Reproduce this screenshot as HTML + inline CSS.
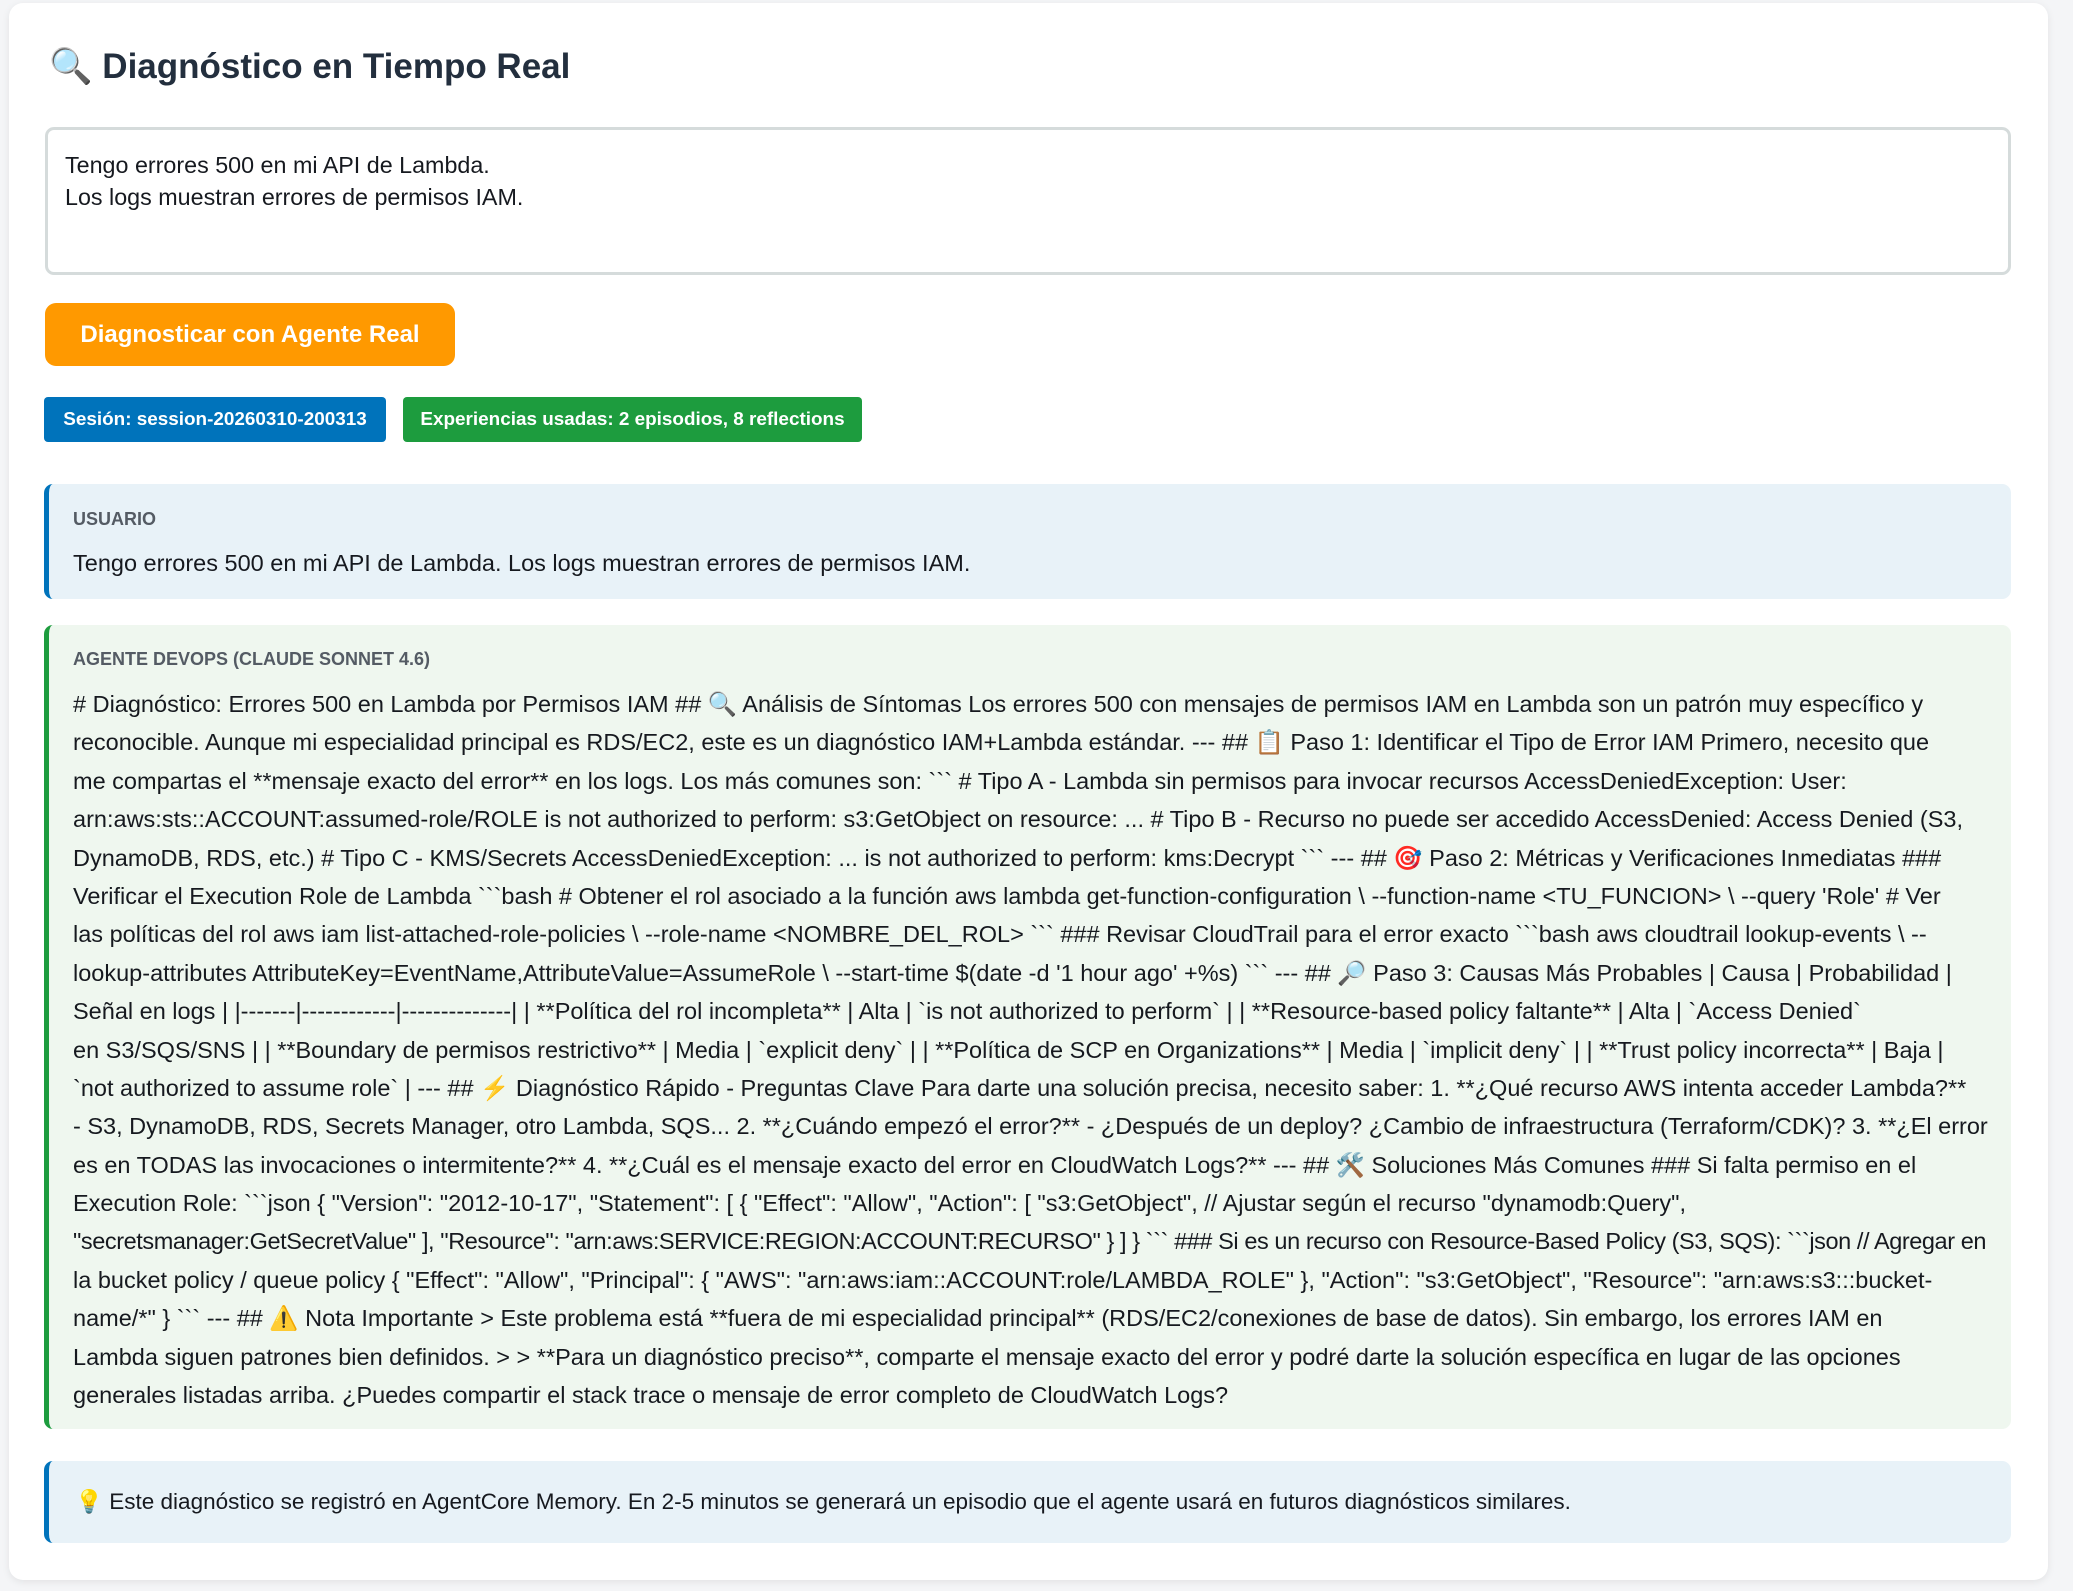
<!DOCTYPE html>
<html><head><meta charset="utf-8"><style>
html,body{margin:0;padding:0}
body{width:2073px;height:1591px;background:#f4f5f7;font-family:"Liberation Sans",sans-serif;color:#16191f;overflow:hidden;position:relative}
.card{position:absolute;left:9px;top:3px;width:2039px;height:1577px;background:#fff;border-radius:14px;box-shadow:0 2px 8px rgba(0,0,0,.08)}
.abs{position:absolute}
h1{position:absolute;left:49px;top:46px;margin:0;font-size:35px;font-weight:bold;color:#232f3e;white-space:nowrap}
.ta{left:45px;top:127px;width:1960px;height:142px;border:3px solid #d5dbdb;border-radius:9px;background:#fff}
.ta div{position:absolute;left:17px;font-size:23.3px;white-space:nowrap}
.btn{left:45px;top:303px;width:410px;height:63px;background:#ff9900;border-radius:11px;color:#fff;font-weight:bold;font-size:24px;text-align:center;line-height:63px}
.badge{top:397px;height:45px;border-radius:4px;color:#fff;font-weight:bold;font-size:18.9px;line-height:45px;text-align:center;white-space:nowrap}
.box{left:44px;border-radius:9px;overflow:hidden}
.lbl{position:absolute;left:24px;font-size:18px;font-weight:bold;color:#545b64;white-space:nowrap}
.txt{position:absolute;left:24px;font-size:23.5px;white-space:nowrap;color:#16191f}
.lines div{height:38.4px;line-height:38.4px;white-space:nowrap;font-size:23.5px}
</style></head><body>
<div class="card"></div>
<h1>🔍 Diagnóstico en Tiempo Real</h1>
<div class="abs ta"><div style="top:22px">Tengo errores 500 en mi API de Lambda.</div><div style="top:54px">Los logs muestran errores de permisos IAM.</div></div>
<div class="abs btn">Diagnosticar con Agente Real</div>
<div class="abs badge" style="left:44px;width:342px;background:#0073bb">Sesión: session-20260310-200313</div>
<div class="abs badge" style="left:403px;width:459px;background:#1d9c3e">Experiencias usadas: 2 episodios, 8 reflections</div>

<div class="abs box" style="top:484px;height:115px;background:#e8f2f8;border-left:5px solid #0073bb;width:1962px">
<div class="lbl" style="top:25px">USUARIO</div>
<div class="txt" style="top:66px">Tengo errores 500 en mi API de Lambda. Los logs muestran errores de permisos IAM.</div>
</div>

<div class="abs box" style="top:625px;height:804px;background:#eff7ef;border-left:5px solid #1d9c3e;width:1962px">
<div class="lbl" style="top:24px">AGENTE DEVOPS (CLAUDE SONNET 4.6)</div>
<div class="lines abs" style="left:24px;top:60px">
<div># Diagnóstico: Errores 500 en Lambda por Permisos IAM ## 🔍 Análisis de Síntomas Los errores 500 con mensajes de permisos IAM en Lambda son un patrón muy específico y</div>
<div>reconocible. Aunque mi especialidad principal es RDS/EC2, este es un diagnóstico IAM+Lambda estándar. --- ## 📋 Paso 1: Identificar el Tipo de Error IAM Primero, necesito que</div>
<div>me compartas el **mensaje exacto del error** en los logs. Los más comunes son: &#96;&#96;&#96; # Tipo A - Lambda sin permisos para invocar recursos AccessDeniedException: User:</div>
<div>arn:aws:sts::ACCOUNT:assumed-role/ROLE is not authorized to perform: s3:GetObject on resource: ... # Tipo B - Recurso no puede ser accedido AccessDenied: Access Denied (S3,</div>
<div>DynamoDB, RDS, etc.) # Tipo C - KMS/Secrets AccessDeniedException: ... is not authorized to perform: kms:Decrypt &#96;&#96;&#96; --- ## 🎯 Paso 2: Métricas y Verificaciones Inmediatas ###</div>
<div>Verificar el Execution Role de Lambda &#96;&#96;&#96;bash # Obtener el rol asociado a la función aws lambda get-function-configuration \ --function-name &lt;TU_FUNCION&gt; \ --query 'Role' # Ver</div>
<div>las políticas del rol aws iam list-attached-role-policies \ --role-name &lt;NOMBRE_DEL_ROL&gt; &#96;&#96;&#96; ### Revisar CloudTrail para el error exacto &#96;&#96;&#96;bash aws cloudtrail lookup-events \ --</div>
<div>lookup-attributes AttributeKey=EventName,AttributeValue=AssumeRole \ --start-time $(date -d '1 hour ago' +%s) &#96;&#96;&#96; --- ## 🔎 Paso 3: Causas Más Probables | Causa | Probabilidad |</div>
<div>Señal en logs | |-------|------------|--------------| | **Política del rol incompleta** | Alta | &#96;is not authorized to perform&#96; | | **Resource-based policy faltante** | Alta | &#96;Access Denied&#96;</div>
<div>en S3/SQS/SNS | | **Boundary de permisos restrictivo** | Media | &#96;explicit deny&#96; | | **Política de SCP en Organizations** | Media | &#96;implicit deny&#96; | | **Trust policy incorrecta** | Baja |</div>
<div>&#96;not authorized to assume role&#96; | --- ## ⚡ Diagnóstico Rápido - Preguntas Clave Para darte una solución precisa, necesito saber: 1. **¿Qué recurso AWS intenta acceder Lambda?**</div>
<div>- S3, DynamoDB, RDS, Secrets Manager, otro Lambda, SQS... 2. **¿Cuándo empezó el error?** - ¿Después de un deploy? ¿Cambio de infraestructura (Terraform/CDK)? 3. **¿El error</div>
<div>es en TODAS las invocaciones o intermitente?** 4. **¿Cuál es el mensaje exacto del error en CloudWatch Logs?** --- ## 🛠️ Soluciones Más Comunes ### Si falta permiso en el</div>
<div>Execution Role: &#96;&#96;&#96;json { "Version": "2012-10-17", "Statement": [ { "Effect": "Allow", "Action": [ "s3:GetObject", // Ajustar según el recurso "dynamodb:Query",</div>
<div style="letter-spacing:-0.42px">"secretsmanager:GetSecretValue" ], "Resource": "arn:aws:SERVICE:REGION:ACCOUNT:RECURSO" } ] } &#96;&#96;&#96; ### Si es un recurso con Resource-Based Policy (S3, SQS): &#96;&#96;&#96;json // Agregar en</div>
<div>la bucket policy / queue policy { "Effect": "Allow", "Principal": { "AWS": "arn:aws:iam::ACCOUNT:role/LAMBDA_ROLE" }, "Action": "s3:GetObject", "Resource": "arn:aws:s3:::bucket-</div>
<div>name/*" } &#96;&#96;&#96; --- ## ⚠️ Nota Importante &gt; Este problema está **fuera de mi especialidad principal** (RDS/EC2/conexiones de base de datos). Sin embargo, los errores IAM en</div>
<div>Lambda siguen patrones bien definidos. &gt; &gt; **Para un diagnóstico preciso**, comparte el mensaje exacto del error y podré darte la solución específica en lugar de las opciones</div>
<div>generales listadas arriba. ¿Puedes compartir el stack trace o mensaje de error completo de CloudWatch Logs?</div>
</div>
</div>

<div class="abs box" style="top:1461px;height:82px;background:#e8f2f8;border-left:5px solid #0073bb;width:1962px">
<div class="txt" style="top:28px;left:26px;font-size:22.5px">💡 Este diagnóstico se registró en AgentCore Memory. En 2-5 minutos se generará un episodio que el agente usará en futuros diagnósticos similares.</div>
</div>
</body></html>
